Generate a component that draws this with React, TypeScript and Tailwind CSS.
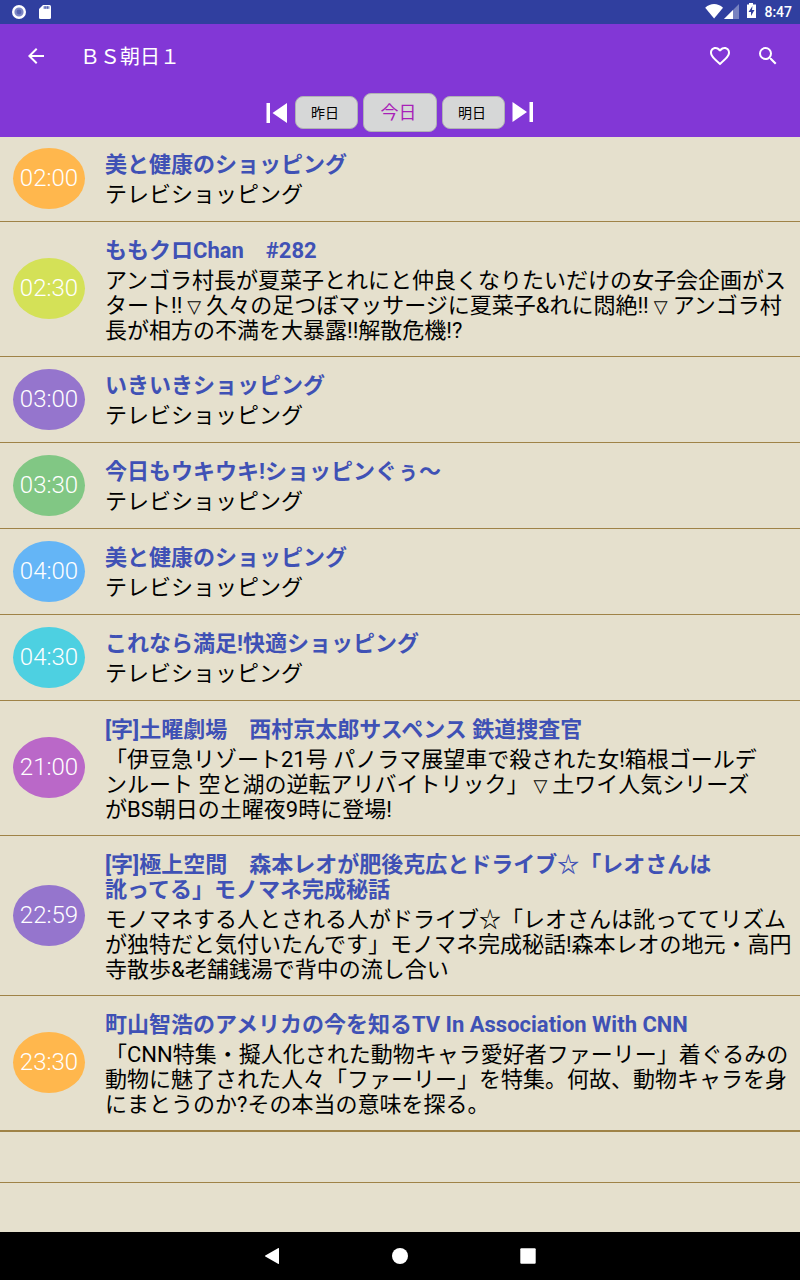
import { Fragment } from "react";

interface Program {
  time: string;
  color: string;
  title: string;
  detail: string;
}

const SHOPPING = "テレビショッピング";

const programs: Program[] = [
  { time: "02:00", color: "bg-[#ffb74d]", title: "美と健康のショッピング", detail: SHOPPING },
  {
    time: "02:30",
    color: "bg-[#d4e157]",
    title: "ももクロChan　#282",
    detail:
      "アンゴラ村長が夏菜子とれにと仲良くなりたいだけの女子会企画がス\nタート!!▽久々の足つぼマッサージに夏菜子&れに悶絶!!▽アンゴラ村\n長が相方の不満を大暴露!!解散危機!?",
  },
  { time: "03:00", color: "bg-[#9575cd]", title: "いきいきショッピング", detail: SHOPPING },
  { time: "03:30", color: "bg-[#81c784]", title: "今日もウキウキ!ショッピンぐぅ〜", detail: SHOPPING },
  { time: "04:00", color: "bg-[#64b5f6]", title: "美と健康のショッピング", detail: SHOPPING },
  { time: "04:30", color: "bg-[#4dd0e1]", title: "これなら満足!快適ショッピング", detail: SHOPPING },
  {
    time: "21:00",
    color: "bg-[#ba68c8]",
    title: "[字]土曜劇場　西村京太郎サスペンス 鉄道捜査官",
    detail:
      "「伊豆急リゾート21号 パノラマ展望車で殺された女!箱根ゴールデ\nンルート 空と湖の逆転アリバイトリック」▽土ワイ人気シリーズ\nがBS朝日の土曜夜9時に登場!",
  },
  {
    time: "22:59",
    color: "bg-[#9575cd]",
    title: "[字]極上空間　森本レオが肥後克広とドライブ☆「レオさんは\n訛ってる」モノマネ完成秘話",
    detail:
      "モノマネする人とされる人がドライブ☆「レオさんは訛っててリズム\nが独特だと気付いたんです」モノマネ完成秘話!森本レオの地元・高円\n寺散歩&老舗銭湯で背中の流し合い",
  },
  {
    time: "23:30",
    color: "bg-[#ffb74d]",
    title: "町山智浩のアメリカの今を知るTV In Association With CNN",
    detail:
      "「CNN特集・擬人化された動物キャラ愛好者ファーリー」着ぐるみの\n動物に魅了された人々「ファーリー」を特集。何故、動物キャラを身\nにまとうのか?その本当の意味を探る。",
  },
];

export default function App() {
  return (
    <div
      lang="ja"
      className="min-h-screen flex flex-col bg-[#e5e0cd] font-[Roboto,'Noto_Sans_CJK_JP',sans-serif]"
    >
      <StatusBar />
      <Header />
      <main className="flex-1">
        <ul className="-mt-px border-b border-[#9f8347]">
          {programs.map((p) => (
            <ProgramRow key={p.time} program={p} />
          ))}
        </ul>
        <div className="h-[51px] border-b border-[#9f8347]" />
      </main>
      <NavBar />
    </div>
  );
}

function StatusBar() {
  return (
    <div className="h-6 flex items-center justify-between bg-[#303f9f] pl-3 pr-2 text-white">
      <svg width="42" height="24" viewBox="0 0 42 24">
        <circle cx="7" cy="12" r="5.8" fill="#7c87c5" stroke="#fff" strokeWidth="2.4" />
        <circle cx="7" cy="12" r="2.4" fill="#5662b0" />
        <path d="M31 5h6.500a1.500 1.500 0 0 1 1.500 1.500v11a1.500 1.500 0 0 1-1.500 1.500h-9a1.500 1.500 0 0 1-1.500-1.500V9z" fill="#fff" />
        <path d="M31.500 6.200h6v2.600h-6z" fill="#8a94cc" />
        <path d="M32.800 6.200h.6v2.600h-.6zM35.200 6.200h.6v2.600h-.6z" fill="#303f9f" />
      </svg>
      <div className="flex items-center gap-[7px]">
        <svg width="52" height="24" viewBox="0 0 52 24" fill="#fff">
          <path d="M.2 7.800C5.500 2.800 12.700 2.800 18 7.800L9.100 18.500z" />
          <path d="M34 4v15H19z" fill="#fff" fillOpacity=".35" />
          <path d="M28 10v9h-9z" />
          <path d="M44 3h4v1.500h3V18h-9V4.500h2z" />
          <path d="M47.500 6l-4 6h2.500v4l3.500-6H47z" fill="#303f9f" />
        </svg>
        <span className="text-sm font-medium">8:47</span>
      </div>
    </div>
  );
}

function Header() {
  return (
    <header className="relative z-10 bg-[#8237d6] text-white">
      <div className="h-16 flex items-center px-5">
        <button aria-label="戻る" className="p-1">
          <svg width="24" height="24" viewBox="0 0 24 24" fill="currentColor">
            <path d="M20 11H7.830l5.590-5.590L12 4l-8 8 8 8 1.410-1.410L7.830 13H20v-2z" />
          </svg>
        </button>
        <h1 className="flex-1 pl-7 pt-0.5 text-xl">ＢＳ朝日１</h1>
        <div className="flex gap-6">
          <button aria-label="お気に入り">
            <svg width="24" height="24" viewBox="0 0 24 24" fill="currentColor">
              <path d="M16.500 3c-1.740 0-3.410.81-4.500 2.090C10.910 3.810 9.240 3 7.500 3 4.420 3 2 5.420 2 8.500c0 3.780 3.400 6.860 8.550 11.540L12 21.350l1.450-1.320C18.600 15.360 22 12.280 22 8.500 22 5.420 19.580 3 16.500 3zm-4.400 15.550l-.1.100-.1-.1C7.140 14.240 4 11.390 4 8.500 4 6.500 5.500 5 7.500 5c1.540 0 3.040.99 3.570 2.360h1.870C13.460 5.990 14.960 5 16.500 5c2 0 3.500 1.500 3.500 3.500 0 2.890-3.140 5.740-7.900 10.050z" />
            </svg>
          </button>
          <button aria-label="検索">
            <svg width="24" height="24" viewBox="0 0 24 24" fill="currentColor">
              <path d="M15.500 14h-.79l-.28-.27A6.471 6.471 0 0 0 16 9.500 6.500 6.500 0 1 0 9.500 16c1.610 0 3.090-.59 4.230-1.570l.27.28v.79l5 4.990L20.490 19l-4.990-5zm-6 0C7.010 14 5 11.990 5 9.500S7.010 5 9.500 5 14 7.010 14 9.500 11.990 14 9.500 14z" />
            </svg>
          </button>
        </div>
      </div>
      <div className="h-[49px] flex items-center justify-center gap-[5px]">
        <button aria-label="前へ" className="mr-0.5">
          <svg width="22" height="22" viewBox="0 0 22 22" fill="#fff">
            <path d="M.5 1H4v20H.5zM21 1v20L6.500 11z" />
          </svg>
        </button>
        <DayButton label="昨日" />
        <DayButton label="今日" active />
        <DayButton label="明日" />
        <button aria-label="次へ" className="ml-0.5">
          <svg width="22" height="22" viewBox="0 0 22 22" fill="#fff">
            <path d="M.5 0v20L15 10zM17.500 0H21v20h-3.500z" />
          </svg>
        </button>
      </div>
    </header>
  );
}

function DayButton({ label, active = false }: { label: string; active?: boolean }) {
  return (
    <button
      className={`rounded-lg border border-[#b0b2b4] bg-[#d6d7d7] pr-[3px] ${
        active ? "w-[74px] h-[39px] text-lg text-[#a81fb8]" : "w-[63px] h-[33px] text-sm text-black"
      }`}
    >
      {label}
    </button>
  );
}

function ProgramRow({ program }: { program: Program }) {
  const { time, color, title, detail } = program;

  return (
    <li className="min-h-[86px] flex items-center gap-5 border-b border-[#9f8347] pl-[13px] pb-px">
      <time
        className={`w-[72px] h-[61px] shrink-0 rounded-[50%] flex items-center justify-center pb-px text-2xl font-light text-white ${color}`}
      >
        {time}
      </time>
      <div className="self-start pt-4 pb-3 text-[22px] leading-[25px]">
        <h2 className="font-bold text-[#3f51b5] whitespace-pre-line">{title}</h2>
        <p className="mt-[5px] text-black">
          {detail.split("\n").map((line) => (
            <span key={line} className="block">
              {line.split("▽").map((part, i) => (
                <Fragment key={i}>
                  {i > 0 && <Mark />}
                  {part}
                </Fragment>
              ))}
            </span>
          ))}
        </p>
      </div>
    </li>
  );
}

// separator between topics inside a description
function Mark() {
  return <span className="px-[5px] align-middle font-['DejaVu_Sans'] text-lg leading-none">▽</span>;
}

function NavBar() {
  return (
    <nav className="h-12 flex items-center justify-center gap-26 bg-black">
      <button aria-label="戻る">
        <svg width="24" height="24" viewBox="0 0 24 24" fill="#fff">
          <path d="M18 4.200a.6.6 0 0 1 1 .4v14.800a.6.6 0 0 1-1 .4L5.300 12.500a.6.6 0 0 1 0-1z" />
        </svg>
      </button>
      <button aria-label="ホーム">
        <svg width="24" height="24" viewBox="0 0 24 24" fill="#fff">
          <circle cx="12" cy="12" r="8" />
        </svg>
      </button>
      <button aria-label="履歴">
        <svg width="24" height="24" viewBox="0 0 24 24" fill="#fff">
          <rect x="4.300" y="4.300" width="15.400" height="15.400" rx="1" />
        </svg>
      </button>
    </nav>
  );
}
